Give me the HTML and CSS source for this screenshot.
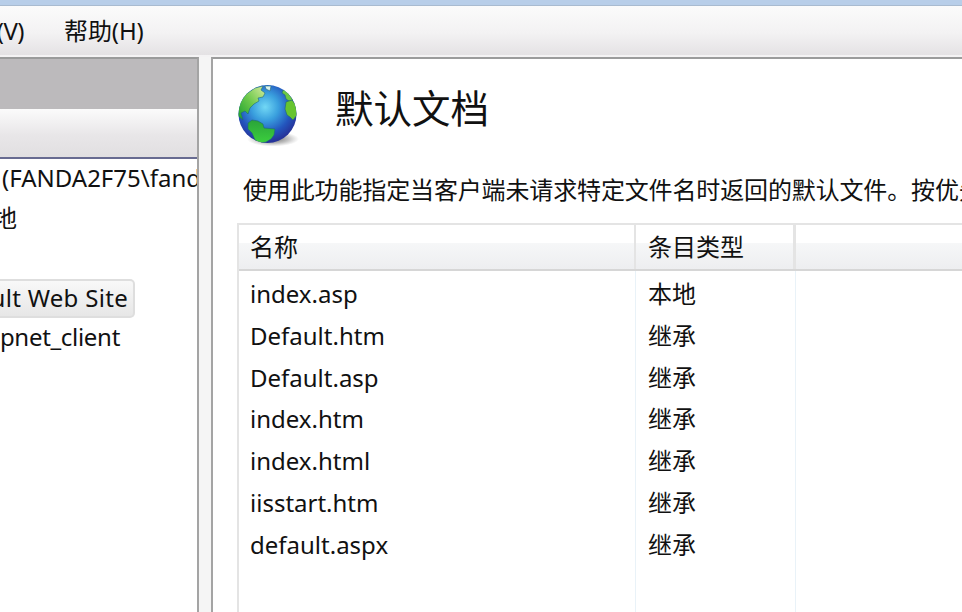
FILE: index.html
```html
<!DOCTYPE html>
<html lang="zh-CN">
<head>
<meta charset="utf-8">
<title>默认文档</title>
<link rel="stylesheet" href="styles.css">
</head>
<body>
<div class="window">
  <nav class="menu"><span class="view">(V)</span><span class="help">帮助(H)</span></nav>
  <div class="panes">
    <aside class="side">
      <div class="side-title"></div>
      <div class="side-tools"></div>
      <div class="tree">
        <div class="node server"><span>(FANDA2F75\fand</span></div>
        <div class="node local"><span>地</span></div>
        <div class="node"></div>
        <div class="node site"><span>ult Web Site</span></div>
        <div class="node client"><span>pnet_client</span></div>
      </div>
    </aside>
    <main class="main">
      <header class="head">
        <svg class="globe" width="64" height="66" viewBox="0 0 64 66">
          <defs>
            <radialGradient id="sea" cx="46%" cy="38%" r="60%">
              <stop offset="0" stop-color="#72d8f5"/><stop offset=".38" stop-color="#3aa0de"/><stop offset=".75" stop-color="#2355bd"/><stop offset="1" stop-color="#26349a"/>
            </radialGradient>
            <radialGradient id="shade"><stop offset="0" stop-color="#333" stop-opacity=".75"/><stop offset=".6" stop-color="#555" stop-opacity=".35"/><stop offset="1" stop-color="#777" stop-opacity="0"/></radialGradient>
            <linearGradient id="land" x1="0" y1="1" x2="1" y2="0"><stop offset="0" stop-color="#159c2c"/><stop offset=".5" stop-color="#6cc84a"/><stop offset="1" stop-color="#d8eda0"/></linearGradient>
            <linearGradient id="south" x1="0" y1="0" x2="0" y2="1"><stop offset="0" stop-color="#2aa339"/><stop offset="1" stop-color="#3ccf3e"/></linearGradient>
            <clipPath id="ball"><circle cx="31.5" cy="31" r="29"/></clipPath>
          </defs>
          <ellipse cx="37" cy="56" rx="26" ry="7.5" fill="url(#shade)"/>
          <circle cx="31.5" cy="31" r="29" fill="url(#sea)"/>
          <g clip-path="url(#ball)" stroke="#1c6674" stroke-opacity=".55" stroke-width="1">
            <path d="M2 33L3 21L10 11L19 5L27 3L25 7L29 10L27 14L22 15L23 18L18 21L14 25L12 31L9 28L5 30L7 37Z" fill="url(#land)"/>
            <path d="M12 40L16 37L22 38L27 41L28 45L39 46L38 52L35 56L30 59L24 60L19 57L16 50L12 46Z" fill="url(#south)"/>
            <path d="M29 3H35L34 8L30 6Z" fill="#d9f1eb"/>
            <path d="M47 7L51 8L57 17L53 18L50 16L49 12L46 10Z" fill="#6cc844"/>
            <path d="M50 19L56 17L60 22L61 32L57 37L54 34L51 32L49 26Z" fill="#67c42f"/>
          </g>
        </svg>
        <h1>默认文档</h1>
      </header>
      <p class="intro">使用此功能指定当客户端未请求特定文件名时返回的默认文件。按优先</p>
      <section class="list">
        <div class="row heading"><div>名称</div><div>条目类型</div><div></div></div>
        <div class="rows">
          <div class="row"><div>index.asp</div><div>本地</div></div>
          <div class="row"><div>Default.htm</div><div>继承</div></div>
          <div class="row"><div>Default.asp</div><div>继承</div></div>
          <div class="row"><div>index.htm</div><div>继承</div></div>
          <div class="row"><div>index.html</div><div>继承</div></div>
          <div class="row"><div>iisstart.htm</div><div>继承</div></div>
          <div class="row"><div>default.aspx</div><div>继承</div></div>
        </div>
      </section>
    </main>
  </div>
</div>
</body>
</html>
```
FILE: styles.css
```css
* { box-sizing: border-box; }
body {
  margin: 0;
  overflow: hidden;
  color: #111;
  font: 24px/40px "Noto Sans", "Noto Sans CJK SC", sans-serif;
}
.window { width: 962px; height: 612px; display: flex; flex-direction: column; background: #f5f5f5; overflow: hidden; border-top: 5px solid #b8cee9; }
.menu { height: 52px; flex: none; border-top: 1px solid #a9bbd0; border-bottom: 2px solid #f4f3f4; background: linear-gradient(#fbfbfb, #f3f2f3 55%, #e4e2e4); display: flex; line-height: 49px; white-space: nowrap; }
.view { width: 24px; display: flex; justify-content: flex-end; letter-spacing: -.5px; }
.help { margin-left: 40px; letter-spacing: -.1px; }
.panes { flex: 1; min-height: 0; display: flex; gap: 12px; }
.side { width: 199px; flex: none; border-top: 2px solid #9a9b9b; border-right: 2px solid #a4a4a4; background: #fff; overflow: hidden; }
.side-title { height: 50px; background: #bcbabc; }
.side-tools { height: 50px; border-bottom: 2px solid #686b91; background: linear-gradient(#fbfbfb, #e8e6e8 55%, #e1dfe1); }
.tree { font-size: 24px; white-space: nowrap; }
.node { height: 40px; display: flex; line-height: 38px; }
.server { padding-left: 2px; }
.local { width: 17px; justify-content: flex-end; }
.site { width: 135px; height: 39px; justify-content: flex-end; padding-right: 5px; line-height: 34px; letter-spacing: .3px; border: 2px solid #dedede; border-left: 0; border-radius: 0 5px 5px 0; background: linear-gradient(#f8f8f8, #e7e7e7); }
.client { width: 120px; justify-content: flex-end; line-height: 38px; letter-spacing: -.3px; }
.main { flex: 1; min-width: 0; border-top: 2px solid #9b9c9c; border-left: 2px solid #a4a4a4; background: #fff; padding-left: 24px; display: flex; flex-direction: column; overflow: hidden; }
.head { height: 112px; flex: none; display: flex; padding-top: 24px; }
.globe { margin-left: -1px; flex: none; }
h1 { margin: -3px 0 0 35px; font-size: 38.5px; line-height: 52px; font-weight: 400; font-family: "Noto Sans CJK SC", sans-serif; }
.intro { margin: 0 0 0 6px; height: 52px; flex: none; line-height: 38px; white-space: nowrap; letter-spacing: -.14px; }
.list { flex: 1; display: flex; flex-direction: column; border: 2px solid #e4e4e4; border-right: 0; border-bottom: 0; }
.row { display: grid; grid-template-columns: 397px 160px 1fr; height: 41.75px; line-height: 41px; }
.row > div { padding-left: 12px; white-space: nowrap; }
.row > div:first-child { padding-left: 11px; }
.heading { height: 46px; line-height: 44px; border-bottom: 2px solid #d6d6d6; background: linear-gradient(#fff 0 40%, #f6f7f8 41%, #edeef0); }
.heading > div:not(:last-child) { border-right: 2px solid #e4e4e4; }
.heading > div:nth-child(2) { border-right-width: 3px; }
.rows { flex: 1; padding-top: 2px; background: linear-gradient(#e9f2f8, #e9f2f8) 396px 0 / 1px 100% no-repeat, linear-gradient(#e9f2f8, #e9f2f8) 556px 0 / 1px 100% no-repeat; }
```
